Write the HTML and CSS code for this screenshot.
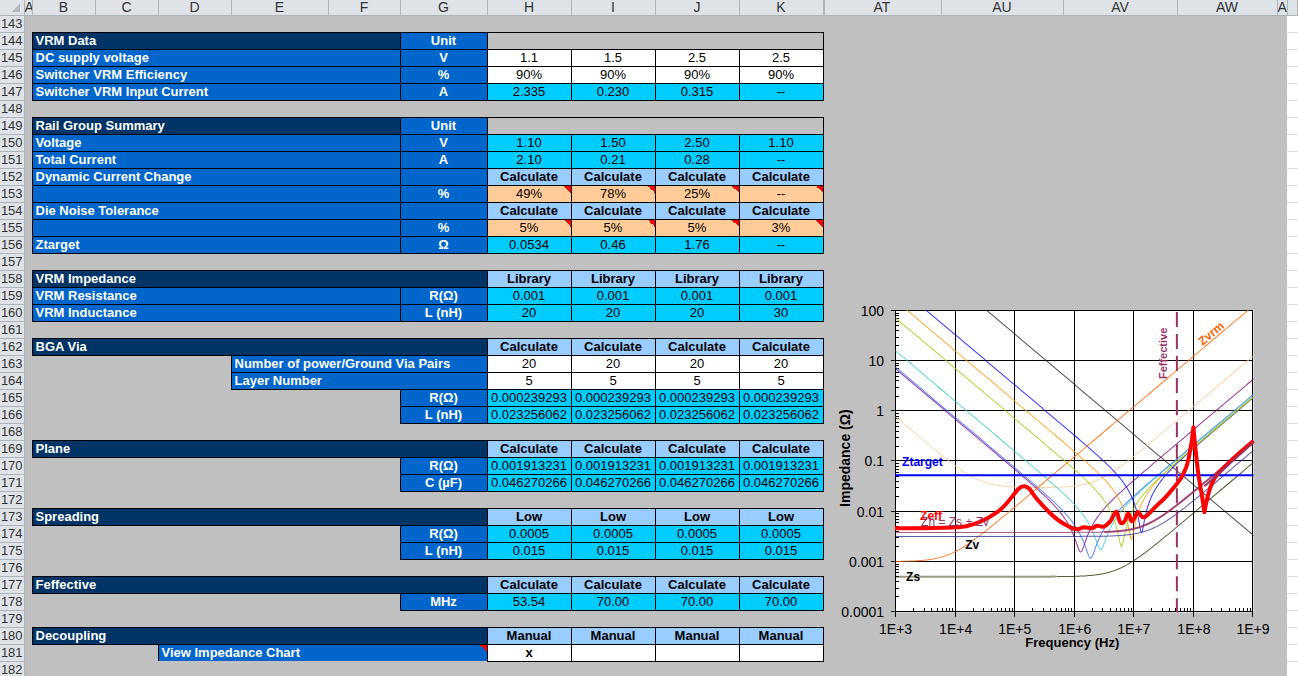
FILE: index.html
```html
<!DOCTYPE html>
<html lang="en">
<head>
<meta charset="utf-8">
<title>PDN Tool</title>
<link rel="stylesheet" href="styles.css">
</head>
<body>
<main class="window">
<table class="sheet">
<colgroup>
<col class="c-num"><col class="c-a"><col class="c-b"><col class="c-c"><col class="c-d"><col class="c-e"><col class="c-f"><col class="c-g">
<col class="c-val"><col class="c-val"><col class="c-val"><col class="c-val">
<col class="c-at"><col class="c-au"><col class="c-av"><col class="c-aw"><col class="c-ax"><col>
</colgroup>
<thead>
<tr><th class="corner"></th><th>A</th><th>B</th><th>C</th><th>D</th><th>E</th><th>F</th><th>G</th><th>H</th><th>I</th><th>J</th><th>K</th><th class="jump">AT</th><th>AU</th><th>AV</th><th>AW</th><th>A</th><th></th></tr>
</thead>
<tbody>
<tr><th>143</th><td colspan="11"></td><td class="chart-cell" colspan="5" rowspan="39">
<svg class="chart" viewBox="824 291 463 387" role="img" aria-label="Impedance against frequency">
<defs><clipPath id="plot"><rect x="895" y="310" width="358" height="302"/></clipPath></defs>
<rect class="plot-area" x="895" y="310" width="358" height="302"/>
<g id="grid" class="grid"></g>
<g id="curves" class="curves" clip-path="url(#plot)"></g>
<path class="ztarget" d="M895 475H1253"/>
<path class="feff" d="M1176.500 312V612"/>
<path class="zeff" d="M895 528C925 528 955 528 966 526S987 519 997 512S1013 494 1018 489S1028 486 1031 491S1044 507 1050 513S1064 524 1068 526S1074 529 1077 529S1081 527 1084 527S1088 528 1091 528S1094 526 1097 525.500S1100 527 1103 526.500S1108 523 1110 521S1114 511 1116 511.500S1118 524 1122 523S1126 513 1128 513.500S1130 522 1132 521S1136 511 1138 512S1141 518 1144 517S1154 507 1160 502S1171 490 1177 483S1183 473 1185 469S1191 449 1193 427C1195 448 1197 470 1199 481S1203 504 1204 512C1206 500 1208 491 1212 482S1220 471 1226 465S1242 450 1253 441"/>
<path class="zh-end" d="M1204 486L1253 442"/>
<g id="axis-labels" class="axis-label"></g>
<g class="curve-label">
<text class="t-target" x="902" y="466">Ztarget</text>
<text class="t-eff" x="920" y="520">Zeff</text>
<text class="t-zh" x="921" y="526">Zh = Zs + Zv</text>
<text x="965" y="549">Zv</text>
<text x="906" y="581">Zs</text>
<text class="t-vrm" transform="translate(1202 346) rotate(-40)">Zvrm</text>
<text class="t-feff" transform="translate(1167 379) rotate(-90)">Feffective</text>
</g>
<text class="y-title" text-anchor="middle" transform="translate(850 458) rotate(-90)">Impedance (Ω)</text>
<text class="x-title" text-anchor="middle" x="1072" y="647">Frequency (Hz)</text>
</svg>
</td><td class="out"></td></tr>
<tr><th>144</th><td></td><td class="head" colspan="5">VRM Data</td><td class="unit">Unit</td><td class="blank" colspan="4"></td><td class="out"></td></tr>
<tr><th>145</th><td></td><td class="label" colspan="5">DC supply voltage</td><td class="unit">V</td><td class="in">1.1</td><td class="in">1.5</td><td class="in">2.5</td><td class="in">2.5</td><td class="out"></td></tr>
<tr><th>146</th><td></td><td class="label" colspan="5">Switcher VRM Efficiency</td><td class="unit">%</td><td class="in">90%</td><td class="in">90%</td><td class="in">90%</td><td class="in">90%</td><td class="out"></td></tr>
<tr><th>147</th><td></td><td class="label" colspan="5">Switcher VRM Input Current</td><td class="unit">A</td><td class="calc">2.335</td><td class="calc">0.230</td><td class="calc">0.315</td><td class="calc">--</td><td class="out"></td></tr>
<tr><th>148</th><td colspan="11"></td><td class="out"></td></tr>
<tr><th>149</th><td></td><td class="head" colspan="5">Rail Group Summary</td><td class="unit">Unit</td><td class="blank" colspan="4"></td><td class="out"></td></tr>
<tr><th>150</th><td></td><td class="label" colspan="5">Voltage</td><td class="unit">V</td><td class="calc">1.10</td><td class="calc">1.50</td><td class="calc">2.50</td><td class="calc">1.10</td><td class="out"></td></tr>
<tr><th>151</th><td></td><td class="label" colspan="5">Total Current</td><td class="unit">A</td><td class="calc">2.10</td><td class="calc">0.21</td><td class="calc">0.28</td><td class="calc">--</td><td class="out"></td></tr>
<tr><th>152</th><td></td><td class="label" colspan="5">Dynamic Current Change</td><td class="unit"></td><td class="mode">Calculate</td><td class="mode">Calculate</td><td class="mode">Calculate</td><td class="mode">Calculate</td><td class="out"></td></tr>
<tr><th>153</th><td></td><td class="label" colspan="5"></td><td class="unit">%</td><td class="tol note">49%</td><td class="tol note">78%</td><td class="tol note">25%</td><td class="tol note">--</td><td class="out"></td></tr>
<tr><th>154</th><td></td><td class="label" colspan="5">Die Noise Tolerance</td><td class="unit"></td><td class="mode">Calculate</td><td class="mode">Calculate</td><td class="mode">Calculate</td><td class="mode">Calculate</td><td class="out"></td></tr>
<tr><th>155</th><td></td><td class="label" colspan="5"></td><td class="unit">%</td><td class="tol note">5%</td><td class="tol note">5%</td><td class="tol note">5%</td><td class="tol note">3%</td><td class="out"></td></tr>
<tr><th>156</th><td></td><td class="label" colspan="5">Ztarget</td><td class="unit">Ω</td><td class="calc">0.0534</td><td class="calc">0.46</td><td class="calc">1.76</td><td class="calc">--</td><td class="out"></td></tr>
<tr><th>157</th><td colspan="11"></td><td class="out"></td></tr>
<tr><th>158</th><td></td><td class="head" colspan="6">VRM Impedance</td><td class="mode">Library</td><td class="mode">Library</td><td class="mode">Library</td><td class="mode">Library</td><td class="out"></td></tr>
<tr><th>159</th><td></td><td class="label" colspan="5">VRM Resistance</td><td class="unit">R(Ω)</td><td class="calc">0.001</td><td class="calc">0.001</td><td class="calc">0.001</td><td class="calc">0.001</td><td class="out"></td></tr>
<tr><th>160</th><td></td><td class="label" colspan="5">VRM Inductance</td><td class="unit">L (nH)</td><td class="calc">20</td><td class="calc">20</td><td class="calc">20</td><td class="calc">30</td><td class="out"></td></tr>
<tr><th>161</th><td colspan="11"></td><td class="out"></td></tr>
<tr><th>162</th><td></td><td class="head" colspan="6">BGA Via</td><td class="mode">Calculate</td><td class="mode">Calculate</td><td class="mode">Calculate</td><td class="mode">Calculate</td><td class="out"></td></tr>
<tr><th>163</th><td colspan="4"></td><td class="label" colspan="3">Number of power/Ground Via Pairs</td><td class="in">20</td><td class="in">20</td><td class="in">20</td><td class="in">20</td><td class="out"></td></tr>
<tr><th>164</th><td colspan="4"></td><td class="label" colspan="3">Layer Number</td><td class="in">5</td><td class="in">5</td><td class="in">5</td><td class="in">5</td><td class="out"></td></tr>
<tr><th>165</th><td colspan="6"></td><td class="unit">R(Ω)</td><td class="calc">0.000239293</td><td class="calc">0.000239293</td><td class="calc">0.000239293</td><td class="calc">0.000239293</td><td class="out"></td></tr>
<tr><th>166</th><td colspan="6"></td><td class="unit">L (nH)</td><td class="calc">0.023256062</td><td class="calc">0.023256062</td><td class="calc">0.023256062</td><td class="calc">0.023256062</td><td class="out"></td></tr>
<tr><th>168</th><td colspan="11"></td><td class="out"></td></tr>
<tr><th>169</th><td></td><td class="head" colspan="6">Plane</td><td class="mode">Calculate</td><td class="mode">Calculate</td><td class="mode">Calculate</td><td class="mode">Calculate</td><td class="out"></td></tr>
<tr><th>170</th><td colspan="6"></td><td class="unit">R(Ω)</td><td class="calc">0.001913231</td><td class="calc">0.001913231</td><td class="calc">0.001913231</td><td class="calc">0.001913231</td><td class="out"></td></tr>
<tr><th>171</th><td colspan="6"></td><td class="unit">C (µF)</td><td class="calc">0.046270266</td><td class="calc">0.046270266</td><td class="calc">0.046270266</td><td class="calc">0.046270266</td><td class="out"></td></tr>
<tr><th>172</th><td colspan="11"></td><td class="out"></td></tr>
<tr><th>173</th><td></td><td class="head" colspan="6">Spreading</td><td class="mode">Low</td><td class="mode">Low</td><td class="mode">Low</td><td class="mode">Low</td><td class="out"></td></tr>
<tr><th>174</th><td colspan="6"></td><td class="unit">R(Ω)</td><td class="calc">0.0005</td><td class="calc">0.0005</td><td class="calc">0.0005</td><td class="calc">0.0005</td><td class="out"></td></tr>
<tr><th>175</th><td colspan="6"></td><td class="unit">L (nH)</td><td class="calc">0.015</td><td class="calc">0.015</td><td class="calc">0.015</td><td class="calc">0.015</td><td class="out"></td></tr>
<tr><th>176</th><td colspan="11"></td><td class="out"></td></tr>
<tr><th>177</th><td></td><td class="head" colspan="6">Feffective</td><td class="mode">Calculate</td><td class="mode">Calculate</td><td class="mode">Calculate</td><td class="mode">Calculate</td><td class="out"></td></tr>
<tr><th>178</th><td colspan="6"></td><td class="unit">MHz</td><td class="calc">53.54</td><td class="calc">70.00</td><td class="calc">70.00</td><td class="calc">70.00</td><td class="out"></td></tr>
<tr><th>179</th><td colspan="11"></td><td class="out"></td></tr>
<tr><th>180</th><td></td><td class="head" colspan="6">Decoupling</td><td class="mode">Manual</td><td class="mode">Manual</td><td class="mode">Manual</td><td class="mode">Manual</td><td class="out"></td></tr>
<tr><th>181</th><td colspan="3"></td><td class="label open note" colspan="4">View Impedance Chart</td><td class="in mark">x</td><td class="in"></td><td class="in"></td><td class="in"></td><td class="out"></td></tr>
<tr><th>182</th><td colspan="11"></td><td class="out"></td></tr>
</tbody>
</table>
</main>
<script src="chart.js"></script>
</body>
</html>
```
FILE: styles.css
```css
* { box-sizing: border-box; }

body {
  margin: 0;
  background: #fff;
  font-family: "Liberation Sans", Arial, sans-serif;
  font-size: 13px;
  line-height: 16px;
  color: #000;
}

.window {
  height: 100vh;
  overflow: hidden;
}

.sheet {
  width: 100%;
  table-layout: fixed;
  border-collapse: collapse;
  background: #c0c0c0;
}

.c-num { width: 24px; }
.c-a { width: 8px; }
.c-b, .c-c { width: 63px; }
.c-d { width: 73px; }
.c-e { width: 97px; }
.c-f { width: 72px; }
.c-g { width: 87px; }
.c-val { width: 84px; }
.c-at { width: 118px; }
.c-au { width: 122px; }
.c-av { width: 114px; }
.c-aw { width: 100px; }
.c-ax { width: 10px; }

tr { height: 17px; }
thead tr { height: 15px; }

th, td {
  padding: 0;
  overflow: hidden;
  white-space: nowrap;
  text-align: center;
  vertical-align: middle;
}

th {
  background: #dfe3e8;
  color: #333;
  font-weight: normal;
  border-bottom: 1px solid #aeb5b8;
  border-right: 1px solid #aeb5b8;
}

thead th {
  font-size: 14px;
  line-height: 14px;
}

.corner {
  background: linear-gradient(to bottom right, transparent 50%, #b8bcc0 50%) right 4px bottom 3px / 9px 9px no-repeat #dfe3e8;
}

.jump { box-shadow: inset 1px 0 #aeb5b8; }

.head, .label, .unit, .mode, .calc, .in, .tol, .blank { border: 1px solid #000; }

.head, .label {
  padding-left: 3px;
  text-align: left;
  font-weight: bold;
  color: #fff;
}

.head { background-color: #003366; }
.label { background-color: #0066cc; }

.unit {
  background: #0066cc;
  color: #fff;
  font-weight: bold;
}

.mode {
  background: #99ccff;
  font-weight: bold;
}

.calc { background: #00ccff; }
.in { background: #fff; }
.tol { background-color: #ffcc99; }
.mark { font-weight: bold; }
.open { border-bottom: none; }

.note {
  background-image: linear-gradient(to bottom left, #f00 50%, transparent 50%);
  background-position: right top;
  background-size: 7px 7px;
  background-repeat: no-repeat;
}

.out {
  background: #fff;
  border-bottom: 1px solid #d6dede;
}

.chart-cell { vertical-align: bottom; }

.chart {
  display: block;
  width: 100%;
}

.plot-area { fill: #fff; }

.grid {
  stroke: #000;
  stroke-width: 1;
  shape-rendering: crispEdges;
}

.curves path {
  fill: none;
  stroke-width: 1;
  opacity: 0.8;
}

.curves .wide { stroke-width: 2; }
.curves .soft { stroke-width: 2; opacity: 0.5; }

.ztarget {
  stroke: #00f;
  stroke-width: 2;
}

.feff {
  stroke: #993366;
  stroke-width: 2;
  stroke-dasharray: 15 7;
}

.zeff {
  fill: none;
  stroke: #f00;
  stroke-width: 4;
  stroke-linejoin: round;
}

.zh-end {
  stroke: #993366;
  stroke-width: 2;
}

.axis-label { font-size: 14px; }

.curve-label {
  font-size: 12px;
  font-weight: bold;
}

.t-target { fill: #00f; }
.t-eff { fill: #f00; }
.t-zh { fill: #993366; font-weight: normal; }
.t-vrm { fill: #ff6600; }
.t-feff { fill: #993366; font-size: 11px; }

.y-title { font-size: 14px; font-weight: bold; }
.x-title { font-size: 13px; font-weight: bold; }
```
FILE: chart.js
```javascript
const NS = "http://www.w3.org/2000/svg";
const X0 = 895.5, Y0 = 611.5, DX = 59.5, DY = 50.2;
const px = lf => X0 + DX * (lf - 3);
const py = lz => Y0 - DY * (lz + 4);

function add(parent, name, attrs, text) {
  const el = document.createElementNS(NS, name);
  for (const key in attrs) el.setAttribute(key, attrs[key]);
  if (text) el.textContent = text;
  document.getElementById(parent).appendChild(el);
}

// Grid lines, tick marks and axis numbers
const zNames = ["0.0001", "0.001", "0.01", "0.1", "1", "10", "100"];
for (let i = 0; i <= 6; i++) {
  const x = Math.floor(px(3 + i)) + 0.5;
  const y = Math.floor(py(i - 4)) + 0.5;
  add("grid", "path", { d: `M${x} 310V617M891 ${y}H1253` });
  add("axis-labels", "text", { x: x, y: 634, "text-anchor": "middle" }, `1E+${3 + i}`);
  add("axis-labels", "text", { x: 884, y: y + 5, "text-anchor": "end" }, zNames[i]);
  if (i < 6) {
    for (let n = 2; n <= 9; n++) {
      const tx = Math.round(px(3 + i + Math.log10(n))) + 0.5;
      const ty = Math.round(py(i - 4 + Math.log10(n))) + 0.5;
      add("grid", "path", { d: `M${tx} 608V612M895 ${ty}H899` });
    }
  }
}

// r: log of resistance; c, l: log reactance of the capacitor and inductor at 1 kHz
function curve(color, r, c, l, from = 3, cls = "", to = 9.02) {
  let d = "";
  for (let lf = from; lf <= to; lf += 0.01) {
    const reactance = 10 ** (l + lf - 3) - 10 ** (c - lf + 3);
    const z = Math.log10(Math.hypot(10 ** r, reactance));
    d += `${d ? "L" : "M"}${px(lf).toFixed(1)} ${py(z).toFixed(1)}`;
  }
  add("curves", "path", { d, stroke: color, class: cls });
}

// Capacitor: starting level, resonant frequency and lowest impedance
const cap = (color, start, f0, r) => curve(color, r, start, start - 2 * (f0 - 3));

curve("#222222", -9, 3.529, -12);
cap("#ffcc99", -0.12, 5.398, -1.526);
cap("#3366ff", 0.87, 6.275, -2.934);
cap("#800080", 0.837, 6.107, -2.81);
cap("#33cccc", 1.195, 6.444, -2.761);
cap("#0000ff", 2.517, 7.13, -2.42);
cap("#ff9900", 2.196, 6.961, -2.556);
cap("#99cc00", 1.847, 6.792, -2.7);
curve("#ff6600", -3, -20, -3.916);
curve("#333300", -3.301, -20, -7.036, 3, "soft", 5.7);
curve("#333300", -3.301, -20, -7.036, 5.7);
curve("#333399", -2.5, -20, -6.797);
curve("#993366", -2.42, -20, -6.617);
curve("#993366", -2.42, -20, -6.617, 6.5, "wide");
```
